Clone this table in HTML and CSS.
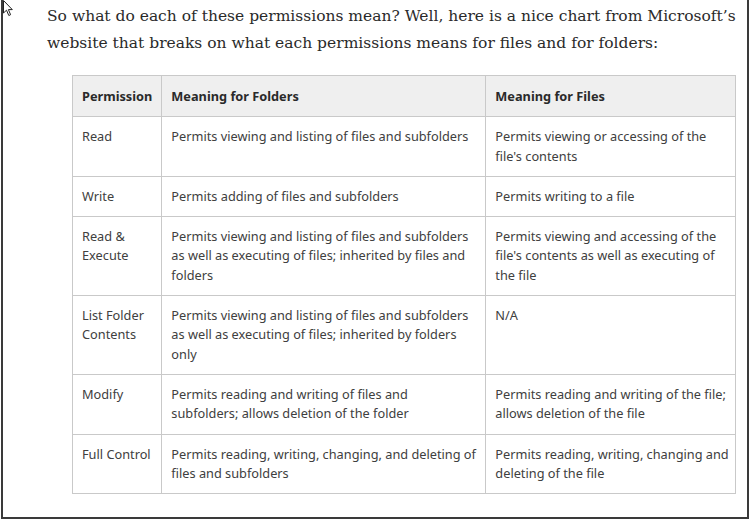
FILE: index.html
```html
<!DOCTYPE html>
<html>
<head>
<meta charset="utf-8">
<link rel="stylesheet" href="styles.css">
</head>
<body>
<div class="frame">
  <svg class="cursor" width="10" height="17" viewBox="0 0 10 17"><path d="M0.5 0.5 L0.5 13 L3.5 10.2 L5.8 15.5 L7.6 14.7 L5.4 9.6 L9.3 9.6 Z" fill="#fff" stroke="#222" stroke-width="1"/></svg>
  <div class="content">
    <p class="intro">So what do each of these permissions mean? Well, here is a nice chart from Microsoft’s website that breaks on what each permissions means for files and for folders:</p>
    <table class="perm">
      <thead>
        <tr><th class="c1">Permission</th><th class="c2">Meaning for Folders</th><th class="c3">Meaning for Files</th></tr>
      </thead>
      <tbody>
        <tr><td>Read</td><td>Permits viewing and listing of files and subfolders</td><td class="c3">Permits viewing or accessing of the file's contents</td></tr>
        <tr><td>Write</td><td>Permits adding of files and subfolders</td><td class="c3">Permits writing to a file</td></tr>
        <tr><td>Read &amp; Execute</td><td>Permits viewing and listing of files and subfolders as well as executing of files; inherited by files and folders</td><td class="c3">Permits viewing and accessing of the file's contents as well as executing of the file</td></tr>
        <tr><td>List Folder Contents</td><td>Permits viewing and listing of files and subfolders as well as executing of files; inherited by folders only</td><td class="c3">N/A</td></tr>
        <tr><td>Modify</td><td>Permits reading and writing of files and subfolders; allows deletion of the folder</td><td class="c3">Permits reading and writing of the file; allows deletion of the file</td></tr>
        <tr><td>Full Control</td><td>Permits reading, writing, changing, and deleting of files and subfolders</td><td class="c3">Permits reading, writing, changing and deleting of the file</td></tr>
      </tbody>
    </table>
  </div>
</div>
</body>
</html>
```
FILE: styles.css
```css
html, body { margin: 0; padding: 0; background: #fff; }
.frame {
  position: relative;
  width: 744px;
  height: 517px;
  margin-left: 1px;
  border-left: 2px solid #3a3a3a;
  border-right: 2px solid #3a3a3a;
  border-bottom: 2px solid #3a3a3a;
  overflow: hidden;
}
.cursor { position: absolute; left: 0; top: 0; }
.content { padding: 3px 0 0 44px; }
.intro {
  margin: 0;
  width: 700px;
  font-family: "DejaVu Serif", serif;
  font-size: 15.5px;
  line-height: 27px;
  color: #2a2a2a;
}
.perm {
  margin: 18px 0 0 25px;
  border-collapse: collapse;
  font-family: "Noto Sans", sans-serif;
  font-size: 12.75px;
  line-height: 19.3px;
  color: #404040;
}
.perm th, .perm td {
  border: 1px solid #c9c9c9;
  padding: 10px 9px 10px 9px;
  text-align: left;
  vertical-align: top;
}
.perm th { background: #efefef; font-weight: bold; color: #2a2a2a; padding: 11px 9px 10px 9px; }
.perm .c3 { padding-right: 4px; }
.c1 { width: 70px; }
.c2 { width: 305px; }
th.c3 { width: 236px; }
```
